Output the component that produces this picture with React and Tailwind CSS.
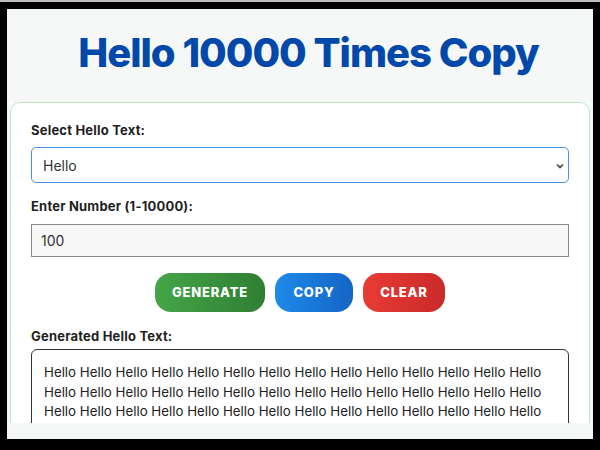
export default function App() {
  const hellos = Array(100).fill("Hello").join(" ");
  return (
    <div className="w-[600px] h-[450px] bg-black overflow-hidden relative" style={{ fontFamily: "Inter, 'Open Sans', sans-serif" }}>
      <div className="h-[2px] bg-[#bdbdbd]" />
      <div className="ml-[7px] mt-[7px] w-[586px] h-[430px] bg-[#f6f8f8] overflow-hidden">
        <div className="h-[414px] overflow-hidden">
          <h1 className="text-center text-[#0049aa] text-[40px] font-extrabold leading-none pt-[24px] pl-[17px] tracking-[-1px]" style={{ fontFamily: "Inter, sans-serif" }}>
            Hello 10000 Times Copy
          </h1>
          <div className="mx-[3px] mt-[29px] bg-white border border-[#c3e3c5] rounded-[10px] px-[20px] pt-[19px] pb-[20px]">
            <label className="block text-[13px] font-bold text-[#1f1f1f] leading-[16px] tracking-[0.2px]">Select Hello Text:</label>
            <div className="relative mt-[9px] h-[36px] border-[1.5px] border-[#4a90e2] rounded-[5px] flex items-center px-[11px]">
              <span className="text-[14px] text-[#333]">Hello</span>
              <svg className="absolute right-[4px] top-[15px]" width="8" height="6" viewBox="0 0 8 6">
                <path d="M1 1.5 L4 4.5 L7 1.5" fill="none" stroke="#444" strokeWidth="1.6" />
              </svg>
            </div>
            <label className="block mt-[15px] text-[13px] font-bold text-[#1f1f1f] leading-[16px] tracking-[0.2px]">Enter Number (1-10000):</label>
            <div className="mt-[10px] h-[33px] border border-[#8a8a8a] bg-[#f7f7f7] flex items-center px-[9px]">
              <span className="text-[14px] text-[#333]">100</span>
            </div>
            <div className="flex justify-center gap-[10px] mt-[16px]">
              <button className="w-[110px] h-[39px] rounded-[16px] text-white text-[13px] font-extrabold tracking-[0.8px] bg-gradient-to-r from-[#45a548] to-[#2f7f33]">GENERATE</button>
              <button className="w-[78px] h-[39px] rounded-[16px] text-white text-[13px] font-extrabold tracking-[0.8px] bg-gradient-to-r from-[#1e8ae8] to-[#1565c6]">COPY</button>
              <button className="w-[82px] h-[39px] rounded-[16px] text-white text-[13px] font-extrabold tracking-[0.8px] bg-gradient-to-r from-[#e83b35] to-[#c92a2a]">CLEAR</button>
            </div>
            <label className="block mt-[16px] text-[13px] font-bold text-[#1f1f1f] leading-[16px] tracking-[0.2px]">Generated Hello Text:</label>
            <div className="mt-[5px] border-[1.5px] border-[#333] rounded-[6px] px-[12px] pt-[13px] pb-[12px] h-[120px] overflow-hidden">
              <p className="text-[13.3px] leading-[19.5px] text-[#222]">{hellos}</p>
            </div>
          </div>
        </div>
      </div>
    </div>
  );
}
